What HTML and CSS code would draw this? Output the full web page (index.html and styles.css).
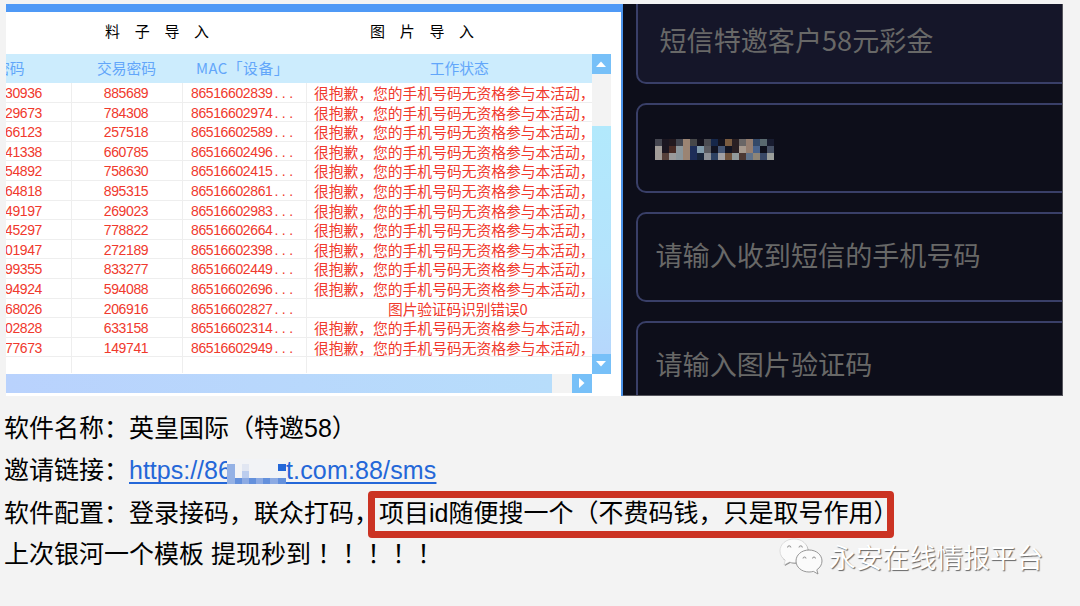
FILE: index.html
```
<!DOCTYPE html>
<html lang="zh-CN">
<head>
<meta charset="utf-8">
<title>软件名称</title>
<link rel="stylesheet" href="styles.css">
</head>
<body>
<main class="page">
  <section class="shots">
    <div class="tool">
      <div class="tabs"><span class="tab-a">料子导入</span><span class="tab-b">图片导入</span></div>
      <div class="grid-area">
        <div class="table">
          <div class="row head"><span class="c1"><b>密码</b></span><span>交易密码</span><span class="dev">MAC「设备」</span><span class="st">工作状态</span></div>
          <div class="row"><span class="c1">30936</span><span>885689</span><span class="mac">86516602839<i>...</i></span><span class="msg">很抱歉，您的手机号码无资格参与本活动，</span></div>
          <div class="row"><span class="c1">29673</span><span>784308</span><span class="mac">86516602974<i>...</i></span><span class="msg">很抱歉，您的手机号码无资格参与本活动，</span></div>
          <div class="row"><span class="c1">66123</span><span>257518</span><span class="mac">86516602589<i>...</i></span><span class="msg">很抱歉，您的手机号码无资格参与本活动，</span></div>
          <div class="row"><span class="c1">41338</span><span>660785</span><span class="mac">86516602496<i>...</i></span><span class="msg">很抱歉，您的手机号码无资格参与本活动，</span></div>
          <div class="row"><span class="c1">54892</span><span>758630</span><span class="mac">86516602415<i>...</i></span><span class="msg">很抱歉，您的手机号码无资格参与本活动，</span></div>
          <div class="row"><span class="c1">64818</span><span>895315</span><span class="mac">86516602861<i>...</i></span><span class="msg">很抱歉，您的手机号码无资格参与本活动，</span></div>
          <div class="row"><span class="c1">49197</span><span>269023</span><span class="mac">86516602983<i>...</i></span><span class="msg">很抱歉，您的手机号码无资格参与本活动，</span></div>
          <div class="row"><span class="c1">45297</span><span>778822</span><span class="mac">86516602664<i>...</i></span><span class="msg">很抱歉，您的手机号码无资格参与本活动，</span></div>
          <div class="row"><span class="c1">01947</span><span>272189</span><span class="mac">86516602398<i>...</i></span><span class="msg">很抱歉，您的手机号码无资格参与本活动，</span></div>
          <div class="row"><span class="c1">99355</span><span>833277</span><span class="mac">86516602449<i>...</i></span><span class="msg">很抱歉，您的手机号码无资格参与本活动，</span></div>
          <div class="row"><span class="c1">94924</span><span>594088</span><span class="mac">86516602696<i>...</i></span><span class="msg">很抱歉，您的手机号码无资格参与本活动，</span></div>
          <div class="row"><span class="c1">68026</span><span>206916</span><span class="mac">86516602827<i>...</i></span><span class="err">图片验证码识别错误0</span></div>
          <div class="row"><span class="c1">02828</span><span>633158</span><span class="mac">86516602314<i>...</i></span><span class="msg">很抱歉，您的手机号码无资格参与本活动，</span></div>
          <div class="row"><span class="c1">77673</span><span>149741</span><span class="mac">86516602949<i>...</i></span><span class="msg">很抱歉，您的手机号码无资格参与本活动，</span></div>
          <div class="row last"><span></span><span></span><span></span><span></span></div>
        </div>
        <div class="vbar">
          <div class="btn"><svg width="12" height="6" viewBox="0 0 12 6"><path d="M1 6 6 .5 11 6z" fill="#fff"/></svg></div>
          <div class="vthumb"></div>
          <div class="btn"><svg width="12" height="6" viewBox="0 0 12 6"><path d="M1 0 6 5.5 11 0z" fill="#fff"/></svg></div>
        </div>
      </div>
      <div class="hbar"><div class="hthumb"></div><div class="btn"><svg width="6" height="12" viewBox="0 0 6 12"><path d="M0 1 5.5 6 0 11z" fill="#fff"/></svg></div></div>
    </div>
    <div class="form">
      <div class="field first">短信特邀客户58元彩金</div>
      <div class="field">
        <svg class="mosaic" width="119" height="21" viewBox="0 0 17 3" preserveAspectRatio="none" shape-rendering="crispEdges">
          <path fill="#44454f" d="M0 0h1v1H0z"/><path fill="#a19c98" d="M0 1h1v2H0z"/><path fill="#1b1620" d="M1 0h1v2H1z"/><path fill="#55403a" d="M1 2h1v1H1z"/><path fill="#22191f" d="M2 0h1v1H2z"/><path fill="#482b25" d="M2 1h1v1H2z"/><path fill="#9a9a9b" d="M2 2h1v1H2z"/><path fill="#42454f" d="M3 0h1v1H3z"/><path fill="#8b969c" d="M3 1h1v2H3z"/><path fill="#9b8473" d="M4 0h1v3H4z"/><path fill="#464749" d="M5 0h1v1H5z"/><path fill="#1d2d58" d="M5 1h1v2H5z"/><path fill="#14131e" d="M6 0h1v1H6z"/><path fill="#819bab" d="M6 1h1v1H6z"/><path fill="#17243a" d="M6 2h1v1H6z"/><path fill="#4b4c52" d="M7 0h1v1H7z"/><path fill="#5a5b61" d="M7 1h1v1H7z"/><path fill="#8e9197" d="M7 2h1v1H7z"/><path fill="#16274a" d="M8 0h1v1H8z"/><path fill="#121422" d="M8 1h1v1H8z"/><path fill="#2e4263" d="M8 2h1v1H8z"/><path fill="#14131e" d="M9 0h1v1H9z"/><path fill="#455675" d="M9 1h1v1H9z"/><path fill="#a2a1a4" d="M9 2h1v1H9z"/><path fill="#795b40" d="M10 0h1v1h-1z"/><path fill="#121422" d="M10 1h1v1h-1z"/><path fill="#70533c" d="M10 2h1v1h-1z"/><path fill="#2a2023" d="M11 0h1v2h-1z"/><path fill="#929a9b" d="M11 2h1v1h-1z"/><path fill="#696666" d="M12 0h1v1h-1z"/><path fill="#a6998e" d="M12 1h1v1h-1z"/><path fill="#4c3833" d="M12 2h1v1h-1z"/><path fill="#957e70" d="M13 0h1v2h-1z"/><path fill="#60728a" d="M13 2h1v1h-1z"/><path fill="#344968" d="M14 0h1v1h-1z"/><path fill="#4a648d" d="M14 1h1v1h-1z"/><path fill="#8e8577" d="M14 2h1v1h-1z"/><path fill="#59696f" d="M15 0h1v1h-1z"/><path fill="#0e101c" d="M15 1h1v1h-1z"/><path fill="#394967" d="M15 2h1v1h-1z"/><path fill="#181c30" d="M16 0h1v1h-1z"/><path fill="#465064" d="M16 1h1v1h-1z"/><path fill="#9b9f9b" d="M16 2h1v1h-1z"/>
        </svg>
      </div>
      <div class="field">请输入收到短信的手机号码</div>
      <div class="field">请输入图片验证码</div>
    </div>
  </section>
  <section class="notes">
    <p>软件名称：英皇国际（特邀58）</p>
    <p>邀请链接：<a class="link"><span class="part">https://86</span><span class="rest">t.com:88/sms</span><svg class="veil" width="60" height="26" viewBox="0 0 60 26" shape-rendering="crispEdges"><path fill="#f2f3f6" d="M0 0h58v26H0z"/><path fill="#94b1e5" d="M0 5h8v20H0z"/><path fill="#e1e6f2" d="M15 5h7v7h-7z"/><path fill="#bccdee" d="M15 12h7v7h-7z"/><path fill="#8caae3" d="M8 19h50v6H8z"/><path fill="#6490dc" d="M8 19h7v6H8zM22 19h7v6h-7zM36 19h7v6h-7zM51 19h8v6h-8z"/><path fill="#2467d8" d="M51 5h8v7h-8z"/></svg></a></p>
    <p>软件配置：登录接码，联众打码，<span class="marked">项目id随便搜一个（不费码钱，只是取号作用）</span></p>
    <p>上次银河一个模板 提现秒到<span class="bang" lang="zh-TW">！！！！！</span></p>
    <div class="brand">
      <svg width="44" height="38" viewBox="0 0 44 38">
        <g fill="#8b8b8b" transform="translate(.8 .9)"><path d="M15 1C7 1 1 6.200 1 13c0 4 2 7 5.200 9.200L5 27l5.400-3c1.600.5 3.200.8 4.900.8C23 24.500 29 20 29 13 29 6 23 1 15 1z"/></g>
        <path fill="#fbfbfb" stroke="#c4c4c4" stroke-width=".5" d="M15 1C7 1 1 6.200 1 13c0 4 2 7 5.200 9.200L5 27l5.400-3c1.600.5 3.200.8 4.900.8C23 24.500 29 20 29 13 29 6 23 1 15 1z"/>
        <path fill="#fbfbfb" stroke="#8b8b8b" stroke-width=".9" d="M30 12c-7.500 0-13 5-13 11s5.500 11 13 11c1.500 0 3-.2 4.400-.6L39 36l-1.200-4.200C41 29.800 43 26.500 43 23c0-6-5.500-11-13-11z"/>
        <g fill="#eee" stroke="#888" stroke-width=".9"><path d="M8.500 9.500a1.700 1.700 0 0 1 3.400 0M20 9.500a1.700 1.700 0 0 1 3.400 0M24 20.500a1.500 1.500 0 0 1 3 0M33.500 20.500a1.500 1.500 0 0 1 3 0"/></g>
      </svg>
      <span>永安在线情报平台</span>
    </div>
  </section>
</main>
</body>
</html>
```
FILE: styles.css
```
* { box-sizing: border-box; }
body { margin: 0; background: #f3f3f3; font-family: "Liberation Sans", "Noto Sans CJK SC", sans-serif; }
.page { width: 1080px; height: 606px; overflow: hidden; padding: 4px 0 0 6px; }

.shots { display: flex; width: 1057px; height: 391.500px; overflow: hidden; }
.tool { width: 617px; flex: none; background: #fff; border-top: 8px solid #4f99f6; border-right: 2px solid #4b93ea; }
.tabs { height: 42px; display: flex; font-size: 15px; line-height: 37px; letter-spacing: 14.700px; color: #000; padding-left: 99px; font-family: "Noto Sans CJK SC", sans-serif; }
.tab-a { width: 265px; }

.grid-area { display: flex; height: 319.500px; }
.table { width: 585.500px; }
.row { display: grid; grid-template-columns: 66px 111px 124px 284.500px; height: 19.600px; border-bottom: 1px solid #eee; color: #f0392d; font-size: 14px; line-height: 20.500px; letter-spacing: -.38px; text-align: center; }
.row > span { border-right: 1px solid #eee; overflow: hidden; white-space: nowrap; height: 100%; }
.row > span:last-child { border-right: 0; }
.row > span:nth-child(2) { padding-right: 2px; }
.row .c1 { text-align: left; text-indent: -1px; }
.row .mac { text-align: left; padding-left: 8px; }
.mac i { font-style: normal; letter-spacing: 3.500px; margin-left: 2px; }
.row .msg { text-align: left; padding-left: 7px; }
.row .msg, .row .err { font-family: "Noto Sans CJK SC", sans-serif; font-size: 14.800px; letter-spacing: -.03px; line-height: 19px; }
.row .err { padding-left: 17px; letter-spacing: -.2px; }
.row.head { height: 29px; background: #ccecfd; color: #62a6fa; border-bottom: 0; font-family: "Noto Sans CJK SC", sans-serif; font-size: 14.800px; line-height: 28px; letter-spacing: 0; }
.head > span { border-right: 0; }
.head .dev { letter-spacing: .5px; padding-right: 5px; }
.row.head .st { padding-left: 20px; }
.row.head .c1 b { display: block; font-weight: 400; margin-left: -11px; text-indent: 0; }
.row.last { height: 16px; border-bottom: 0; }

.btn { width: 19.500px; height: 19.500px; flex: none; background: #77c0f8; display: flex; align-items: center; justify-content: center; }
.vbar { width: 19.500px; background: #f3f3f3; display: flex; flex-direction: column; }
.vthumb { flex: 1; margin-top: 52.500px; background: linear-gradient(#b2e9fc, #b4e3fc 60%, #b6d7fc); }
.hbar { width: 585.500px; height: 19.500px; display: flex; justify-content: space-between; background: #f3f3f3; }
.hthumb { width: 546px; background: linear-gradient(90deg, #b9d2fd, #b7ddfb); }

.form { flex: 1; background: #0d0e1a; padding-left: 13px; overflow: hidden; border-right: 1px solid #55555d; border-bottom: 1px solid #55555d; }
.field { height: 90px; width: 460px; margin-bottom: 19px; border: 2.500px solid #393f68; border-radius: 10px; padding-left: 17.500px; padding-bottom: 5px; display: flex; align-items: center; color: #686867; font: 27.100px "Noto Sans CJK SC", sans-serif; white-space: nowrap; }
.field.first { margin-top: -10px; background: #151629; padding-left: 21.500px; padding-bottom: 0; }
.mosaic { margin-left: -.5px; margin-top: 7px; }

.notes { margin-left: -2px; padding-top: 11px; font-size: 25px; color: #000; position: relative; }
.notes p { margin: 0; height: 42.500px; line-height: 42.500px; white-space: nowrap; }
.link { display: inline-block; position: relative; color: #2467d8; text-decoration: underline; text-decoration-thickness: 1.500px; text-underline-offset: 3px; text-decoration-skip-ink: none; }
.part { display: inline-block; width: 157px; text-decoration: underline; text-decoration-thickness: 1.500px; text-underline-offset: 3px; }
.rest { display: inline-block; text-decoration: underline; text-decoration-thickness: 1.500px; text-underline-offset: 3px; letter-spacing: .15px; }
.veil { position: absolute; left: 98px; top: 10px; }
.marked { position: relative; }
.marked::after { content: ""; box-sizing: border-box; position: absolute; left: -11px; top: -8px; width: 526px; height: 47px; border: 7.500px solid #cb3323; border-radius: 4px; }
.bang { font-family: "Noto Sans CJK TC", sans-serif; line-height: 0; }
.notes p:nth-child(4) { margin-top: -1px; }
.brand { position: absolute; left: 775px; top: 142px; display: flex; align-items: center; gap: 6px; font: 26.800px/38px "Noto Sans CJK SC", sans-serif; color: #fff; text-shadow: 1px 1px 1px #666; white-space: nowrap; }
```
